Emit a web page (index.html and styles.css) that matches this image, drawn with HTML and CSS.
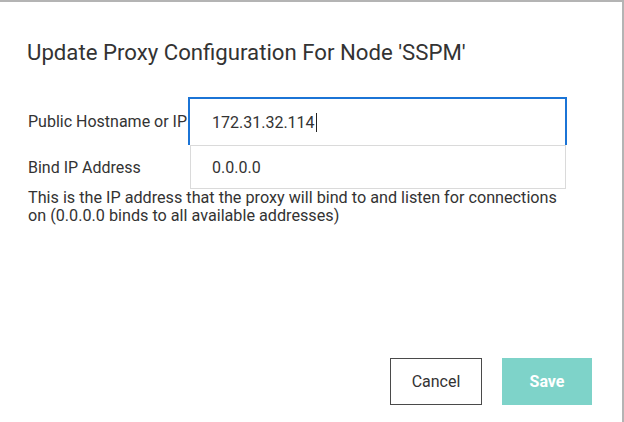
FILE: index.html
```html
<!DOCTYPE html>
<html>
<head>
<meta charset="utf-8">
<link rel="stylesheet" href="styles.css">
</head>
<body>
<div class="dialog">
  <h1 class="title">Update Proxy Configuration For Node 'SSPM'</h1>
  <div class="form">
    <div class="row">
      <label class="label">Public Hostname or IP</label>
      <div class="field field-focus"><span class="value">172.31.32.114</span><span class="caret"></span></div>
    </div>
    <div class="row">
      <label class="label">Bind IP Address</label>
      <div class="field field-plain"><span class="value">0.0.0.0</span></div>
    </div>
    <p class="help">This is the IP address that the proxy will bind to and listen for connections on (0.0.0.0 binds to all available addresses)</p>
  </div>
  <div class="footer">
    <button class="btn btn-cancel">Cancel</button>
    <button class="btn btn-save">Save</button>
  </div>
</div>
</body>
</html>
```

FILE: styles.css
```css
html, body {
  margin: 0;
  padding: 0;
  background: #fff;
}
body {
  font-family: Roboto, "Liberation Sans", sans-serif;
  color: #333;
}
.dialog {
  box-sizing: border-box;
  width: 624px;
  height: 422px;
  border-top: 2px solid #b4b4b4;
  border-right: 2px solid #b4b4b4;
  padding: 0 30px 17px 28px;
  display: flex;
  flex-direction: column;
}
.title {
  margin: 36px 0 0 -1px;
  font-size: 22.2px;
  line-height: 28px;
  font-weight: 400;
  color: #333;
}
.form {
  margin-top: 31px;
}
.row {
  display: flex;
  align-items: stretch;
}
.label {
  width: 160px;
  flex: none;
  font-size: 16px;
  color: #333;
  white-space: nowrap;
  overflow: hidden;
  display: flex;
  align-items: center;
}
.field {
  box-sizing: border-box;
  display: flex;
  align-items: center;
  font-size: 16px;
  color: #333;
  background: #fff;
}
.field-focus {
  width: 379px;
  height: 48px;
  border: 2px solid #1b74d6;
  border-bottom: none;
  padding-left: 22px;
}
.field-plain {
  margin-left: 2px;
  width: 376px;
  height: 44px;
  border: 1px solid #dadada;
  padding-left: 21px;
}
.caret {
  display: inline-block;
  width: 1px;
  height: 19px;
  background: #222;
  margin-left: 1px;
}
.help {
  margin: 0;
  max-width: 540px;
  font-size: 16.2px;
  line-height: 18px;
  color: #333;
}
.footer {
  margin-top: auto;
  display: flex;
  justify-content: flex-end;
  gap: 20px;
}
.btn {
  box-sizing: border-box;
  height: 47px;
  font-family: Roboto, "Liberation Sans", sans-serif;
  font-size: 16px;
  cursor: pointer;
}
.btn-cancel {
  width: 92px;
  background: #fff;
  border: 1px solid #4a4a4a;
  color: #333;
}
.btn-save {
  width: 90px;
  background: #7ed3c9;
  border: none;
  color: #fff;
  font-weight: 700;
}
```
